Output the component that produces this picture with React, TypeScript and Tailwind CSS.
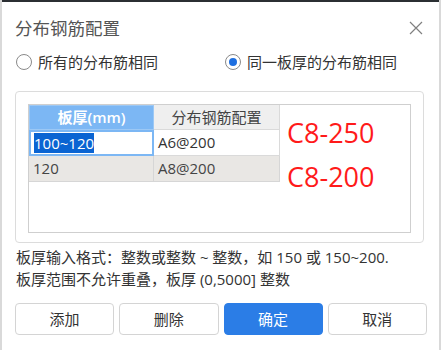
import React from "react";

const font = { fontFamily: '"Open Sans", "Noto Sans CJK SC", sans-serif' };

function Radio({ checked, label }: { checked?: boolean; label: string }) {
  return (
    <div className="flex items-center gap-[6px]">
      <span className="flex h-[16px] w-[16px] items-center justify-center rounded-full border border-[#8a8a8a] bg-white">
        {checked ? <span className="h-[8px] w-[8px] rounded-full bg-[#1e6fe0]" /> : null}
      </span>
      <span className="text-[15px] leading-[20px] text-[#333]">{label}</span>
    </div>
  );
}

export default function App() {
  return (
    <div
      className="relative h-[350px] w-[441px] overflow-hidden border-x-2 border-[#d9d9d9] bg-white"
      style={font}
    >
      <div className="h-[2px] bg-[#2b2f33]" />

      <div className="flex items-center justify-between pl-[13px] pr-[16px] pt-[14px]">
        <span className="text-[17.5px] leading-[24px] text-[#555]">分布钢筋配置</span>
        <svg width="14" height="14" viewBox="0 0 14 14" className="text-[#808080]">
          <path d="M1 1L13 13M13 1L1 13" stroke="currentColor" strokeWidth="1.2" />
        </svg>
      </div>

      <div className="mt-[12px] flex pl-[14px]">
        <div className="w-[209px]">
          <Radio label="所有的分布筋相同" />
        </div>
        <Radio checked label="同一板厚的分布筋相同" />
      </div>

      <div className="ml-[13px] mr-[15px] mt-[19px] h-[152px] rounded-[4px] border border-[#dcdcdc] p-[12px]">
        <div className="h-[129px] border border-[#cfcfcf] bg-white">
          <div className="flex">
            <div className="w-[252px]">
              <div className="grid grid-cols-[125px_126px] text-[15px]">
                <div className="flex h-[25px] items-center justify-center border border-[#9cc8f5] bg-[#7cb7f4] font-semibold text-white">
                  板厚(mm)
                </div>
                <div className="flex h-[25px] items-center justify-center border-b border-r border-[#dadada] bg-[#efefef] text-[#444]">
                  分布钢筋配置
                </div>
                <div className="flex h-[26px] items-center border-2 border-[#7cb7f4] bg-white px-[3px]">
                  <span className="bg-[#0a64d2] leading-[20px] text-white">100~120</span>
                </div>
                <div className="flex h-[26px] items-center border-b border-r border-[#dadada] bg-white px-[4px] text-[#333]">
                  A6@200
                </div>
                <div className="flex h-[26px] items-center border-b border-r border-[#d6d6d6] bg-[#e9e7e4] px-[4px] text-[#444]">
                  120
                </div>
                <div className="flex h-[26px] items-center border-b border-r border-[#d6d6d6] bg-[#e9e7e4] px-[4px] text-[#444]">
                  A8@200
                </div>
              </div>
            </div>
            <div className="flex flex-col pl-[6px] pt-[6px] text-[27px] leading-[44px] text-[#ff1a1a]">
              <span>C8-250</span>
              <span>C8-200</span>
            </div>
          </div>
        </div>
      </div>

      <div className="mt-[3px] px-[14px] text-[15px] leading-[22px] text-[#333]">
        <div>板厚输入格式：整数或整数 ~ 整数，如 150 或 150~200.</div>
        <div>板厚范围不允许重叠，板厚 (0,5000] 整数</div>
      </div>

      <div className="ml-[13px] mr-[12px] mt-[13px] grid grid-cols-4 gap-[5px] text-[15px]">
        <button className="h-[32px] rounded-[4px] border border-[#d4d4d4] bg-white text-[#333]">添加</button>
        <button className="h-[32px] rounded-[4px] border border-[#d4d4d4] bg-white text-[#333]">删除</button>
        <button className="h-[32px] rounded-[4px] border border-[#2b7de6] bg-[#2b7de6] text-white">确定</button>
        <button className="h-[32px] rounded-[4px] border border-[#d4d4d4] bg-white text-[#333]">取消</button>
      </div>
    </div>
  );
}
